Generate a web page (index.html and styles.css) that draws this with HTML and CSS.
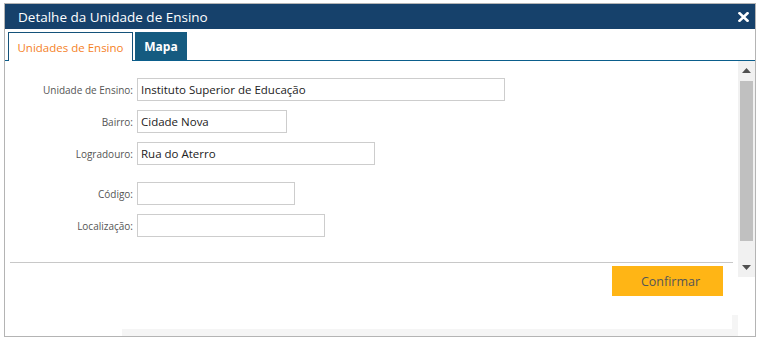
FILE: index.html
```html
<!DOCTYPE html>
<html lang="pt">
<head>
  <meta charset="UTF-8">
  <title>Detalhe da Unidade de Ensino</title>
  <link rel="stylesheet" href="styles.css">
</head>
<body>

  <div class="page">
    <div class="dialog">
      <!-- Title bar -->
      <div class="titlebar">
        <span class="title">Detalhe da Unidade de Ensino</span>
        <svg class="close" width="11" height="10" viewBox="0 0 11 10">
          <path d="M1.5 1.2 L9.5 8.8 M9.5 1.2 L1.5 8.8" stroke="#fff" stroke-width="2.6" stroke-linecap="square"/>
        </svg>
      </div>

      <!-- Tabs -->
      <div class="tabs">
        <div class="tab active">Unidades de Ensino</div>
        <div class="tab">Mapa</div>
      </div>

      <div class="body">
        <div class="main">
          <div class="form">
            <div class="field">
              <label for="unidade">Unidade de Ensino:</label>
              <input type="text" id="unidade" class="w-lg" value="Instituto Superior de Educação">
            </div>
            <div class="field">
              <label for="bairro">Bairro:</label>
              <input type="text" id="bairro" class="w-sm" value="Cidade Nova">
            </div>
            <div class="field">
              <label for="logradouro">Logradouro:</label>
              <input type="text" id="logradouro" class="w-md" value="Rua do Aterro">
            </div>
            <div class="field spaced">
              <label for="codigo">Código:</label>
              <input type="text" id="codigo" class="w-code">
            </div>
            <div class="field">
              <label for="localizacao">Localização:</label>
              <input type="text" id="localizacao" class="w-loc">
            </div>
          </div>
          <div class="separator"></div>
          <div class="actions">
            <button class="btn-confirm">Confirmar</button>
          </div>
        </div>

        <!-- Scrollbar -->
        <div class="scrollbar">
          <svg class="arrow" width="9" height="5" viewBox="0 0 9 5"><path d="M0 5 L4.5 0 L9 5 Z" fill="#505050"/></svg>
          <div class="thumb"></div>
          <svg class="arrow" width="9" height="5" viewBox="0 0 9 5"><path d="M0 0 L4.5 5 L9 0 Z" fill="#505050"/></svg>
        </div>
      </div>

      <div class="hscroll"></div>
    </div>
  </div>

</body>
</html>
```

FILE: styles.css
```css
body {
  margin: 0;
  font-family: "Open Sans", Arial, sans-serif;
  background: #fff;
}
.page {
  padding: 3px 4px 0 4px;
}
.dialog {
  box-sizing: border-box;
  width: 752px;
  height: 334px;
  border: 1px solid #b4b4b4;
  display: flex;
  flex-direction: column;
}
.titlebar {
  height: 25px;
  background: #16416b;
  display: flex;
  align-items: center;
  justify-content: space-between;
  padding: 0 6px 0 13px;
}
.title {
  color: #fff;
  font-size: 13.5px;
}
.close {
  display: block;
}
.tabs {
  display: flex;
  height: 28px;
  padding: 3px 0 0 3px;
  border-bottom: 1px solid #0b5e8c;
}
.tab {
  box-sizing: border-box;
  height: 28px;
  font-size: 12px;
  display: flex;
  align-items: center;
  justify-content: center;
}
.tab.active {
  width: 125px;
  height: 29px;
  margin-right: 2px;
  border: 1px solid #14527a;
  border-bottom: none;
  background: #fff;
  color: #f5821f;
  font-size: 11.5px;
}
.tab:not(.active) {
  width: 52px;
  background: #155b80;
  color: #fff;
  font-weight: bold;
}
.body {
  display: flex;
  align-items: flex-start;
}
.main {
  flex: 1;
}
.form {
  padding-top: 17px;
}
.field {
  display: flex;
  align-items: center;
}
.field + .field {
  margin-top: 9px;
}
.field.spaced {
  margin-top: 17px;
}
.field label {
  width: 128px;
  margin-right: 4px;
  text-align: right;
  font-size: 10px;
  color: #555;
}
.field input {
  box-sizing: border-box;
  height: 23px;
  border: 1px solid #cdcdcd;
  padding: 0 3px;
  font-family: "Open Sans", Arial, sans-serif;
  font-size: 11.5px;
  color: #222;
  outline: none;
}
.w-lg { width: 368px; }
.w-sm { width: 150px; }
.w-md { width: 238px; }
.w-code { width: 158px; }
.w-loc { width: 188px; }
.separator {
  height: 1px;
  background: #c8c8c8;
  margin: 25px 5px 0 5px;
}
.actions {
  display: flex;
  justify-content: flex-end;
  padding: 3px 15px 0 0;
}
.btn-confirm {
  width: 111px;
  height: 30px;
  border: none;
  background: #ffb515;
  color: #555;
  font-family: "Open Sans", Arial, sans-serif;
  font-size: 12.5px;
  padding: 0 0 0 6px;
}
.scrollbar {
  width: 17px;
  height: 216px;
  background: #f1f1f1;
  display: flex;
  flex-direction: column;
  align-items: center;
}
.arrow {
  display: block;
  margin: 7px 0;
}
.scrollbar .arrow:first-child {
  margin: 7px 0 8px 0;
}
.thumb {
  width: 13px;
  height: 161px;
  background: #c0c0c0;
  margin-bottom: 17px;
}
.hscroll {
  box-sizing: border-box;
  margin-top: auto;
  margin-left: 117px;
  width: 616px;
  height: 21px;
  border-right: 6px solid #f5f5f5;
  border-bottom: 7px solid #f5f5f5;
}
```
